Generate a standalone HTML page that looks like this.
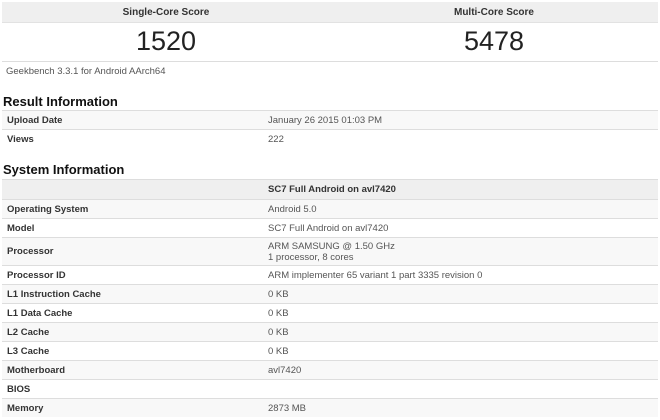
<!DOCTYPE html>
<html><head><style>
body{margin:0;width:660px;height:420px;background:#fff;font-family:"Liberation Sans",Arial,sans-serif;color:#333;position:relative;overflow:hidden}
.a{position:absolute}
.sh{left:2px;width:656px;top:2px;height:20px;background:#efefef;border-bottom:1px solid #e2e2e2}
.sh div,.sn div{position:absolute;width:328px;text-align:center}
.sh div{font-size:10px;font-weight:bold;top:5px}
.sn{left:2px;width:656px;top:23px;height:38px;border-bottom:1px solid #ddd}
.sn div{font-size:27px;top:3px;color:#222}
h2{position:absolute;margin:0;font-size:13px;font-weight:bold;color:#111;left:3px}
table{position:absolute;left:2px;width:656px;border-collapse:collapse;font-size:9.5px}
td{height:18px;border-top:1px solid #ddd;padding:0 0 0 5px;vertical-align:middle;line-height:11px}
td:first-child{width:256px;font-weight:bold;color:#333}
td:last-child{color:#555}
tr.g td{background:#f8f8f8}
tr.hd td{background:#efefef;height:19px;font-weight:bold;color:#333}
</style></head><body>
<div class="a sh"><div style="left:0">Single-Core Score</div><div style="left:328px">Multi-Core Score</div></div>
<div class="a sn"><div style="left:0">1520</div><div style="left:328px">5478</div></div>
<div class="a" style="left:6px;top:66px;font-size:9.5px;color:#555">Geekbench 3.3.1 for Android AArch64</div>
<h2 style="top:94px">Result Information</h2>
<table style="top:110px">
<tr class="g"><td>Upload Date</td><td>January 26 2015 01:03 PM</td></tr>
<tr><td>Views</td><td>222</td></tr>
</table>
<h2 style="top:162px">System Information</h2>
<table style="top:179px">
<tr class="hd"><td></td><td>SC7 Full Android on avl7420</td></tr>
<tr class="g"><td>Operating System</td><td>Android 5.0</td></tr>
<tr><td>Model</td><td>SC7 Full Android on avl7420</td></tr>
<tr class="g"><td style="height:27px">Processor</td><td>ARM SAMSUNG @ 1.50 GHz<br>1 processor, 8 cores</td></tr>
<tr><td>Processor ID</td><td>ARM implementer 65 variant 1 part 3335 revision 0</td></tr>
<tr class="g"><td>L1 Instruction Cache</td><td>0 KB</td></tr>
<tr><td>L1 Data Cache</td><td>0 KB</td></tr>
<tr class="g"><td style="height:17px">L2 Cache</td><td>0 KB</td></tr>
<tr><td>L3 Cache</td><td>0 KB</td></tr>
<tr class="g"><td>Motherboard</td><td>avl7420</td></tr>
<tr><td style="height:17px">BIOS</td><td></td></tr>
<tr class="g"><td>Memory</td><td>2873 MB</td></tr>
</table>
</body></html>
